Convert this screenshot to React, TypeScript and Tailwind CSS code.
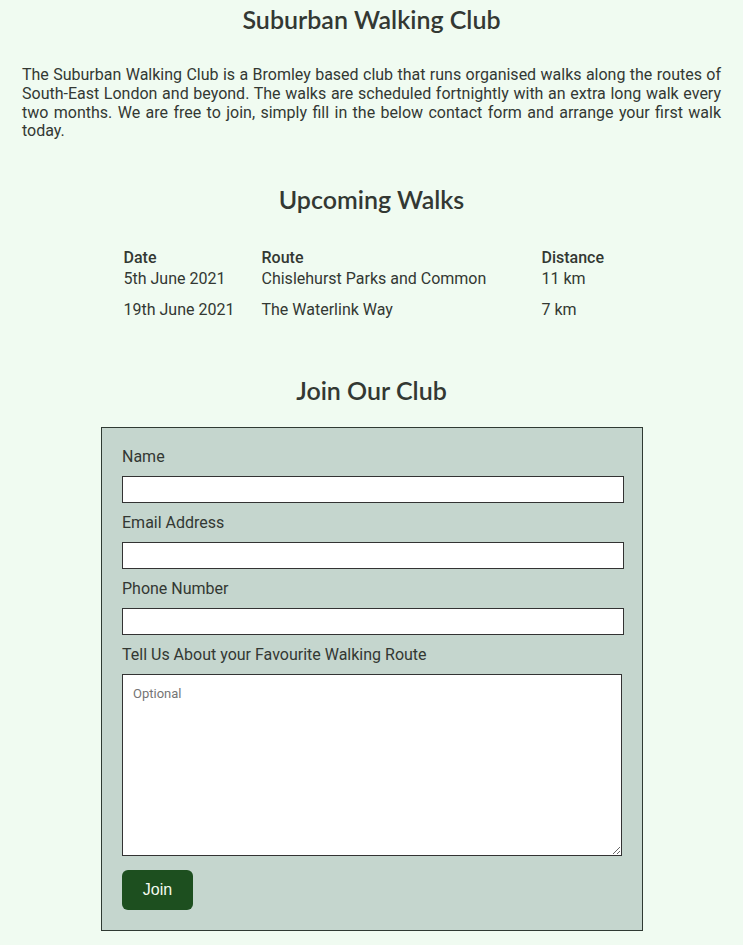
const walks = [
  { date: "5th June 2021", route: "Chislehurst Parks and Common", distance: "11 km" },
  { date: "19th June 2021", route: "The Waterlink Way", distance: "7 km" },
]

const fields = ["Name", "Email Address", "Phone Number"]

export default function App() {
  return (
    <div className="min-h-[945px] bg-[#f0fbf1] text-[#333833] font-['Roboto',sans-serif] text-base">
      <h1 className="pt-[3px] text-center text-[25px] leading-8 font-semibold font-['Lato',sans-serif]">
        Suburban Walking Club
      </h1>

      <p className="mt-[31px] px-[22px] text-justify leading-[18.75px]">
        The Suburban Walking Club is a Bromley based club that runs organised walks along the routes of
        South-East London and beyond. The walks are scheduled fortnightly with an extra long walk every two
        months. We are free to join, simply fill in the below contact form and arrange your first walk today.
      </p>

      <h2 className="mt-[42px] text-center text-[25px] leading-8 font-semibold font-['Lato',sans-serif]">
        Upcoming Walks
      </h2>

      <div className="mx-auto mt-[32px] w-[496px]">
        <div className="grid grid-cols-[138px_280px_78px] h-[21px] leading-[21px] font-medium">
          <div>Date</div>
          <div>Route</div>
          <div>Distance</div>
        </div>
        {walks.map((w, i) => (
          <div
            key={w.date}
            className={`grid grid-cols-[138px_280px_78px] leading-[21px] ${i > 0 ? "pt-[10px]" : ""}`}
          >
            <div>{w.date}</div>
            <div>{w.route}</div>
            <div>{w.distance}</div>
          </div>
        ))}
      </div>

      <h2 className="mt-[54px] text-center text-[25px] leading-8 font-semibold font-['Lato',sans-serif]">
        Join Our Club
      </h2>

      <form className="ml-[101px] mt-[21px] w-[542px] border border-[#2f3a33] bg-[#c5d6ce] pl-[20px] pr-[17px] pt-[19px] pb-[20px]">
        {fields.map((f) => (
          <div key={f} className="mb-[10px]">
            <label className="block leading-[19px] mb-[10px]">{f}</label>
            <input type="text" className="block h-[27px] w-[502px] border border-[#333] bg-white" />
          </div>
        ))}
        <label className="block leading-[19px] mb-[10px]">Tell Us About your Favourite Walking Route</label>
        <textarea
          placeholder="Optional"
          className="block h-[182px] w-[500px] border border-[#333] bg-white px-[10px] py-[9px] text-[13px] placeholder:text-[#757575]"
        />
        <button
          type="button"
          className="mt-[14px] h-[40px] w-[71px] rounded-md bg-[#1d4f1f] text-[#f4fbf0] font-['Liberation_Sans',sans-serif] text-base"
        >
          Join
        </button>
      </form>
    </div>
  )
}
